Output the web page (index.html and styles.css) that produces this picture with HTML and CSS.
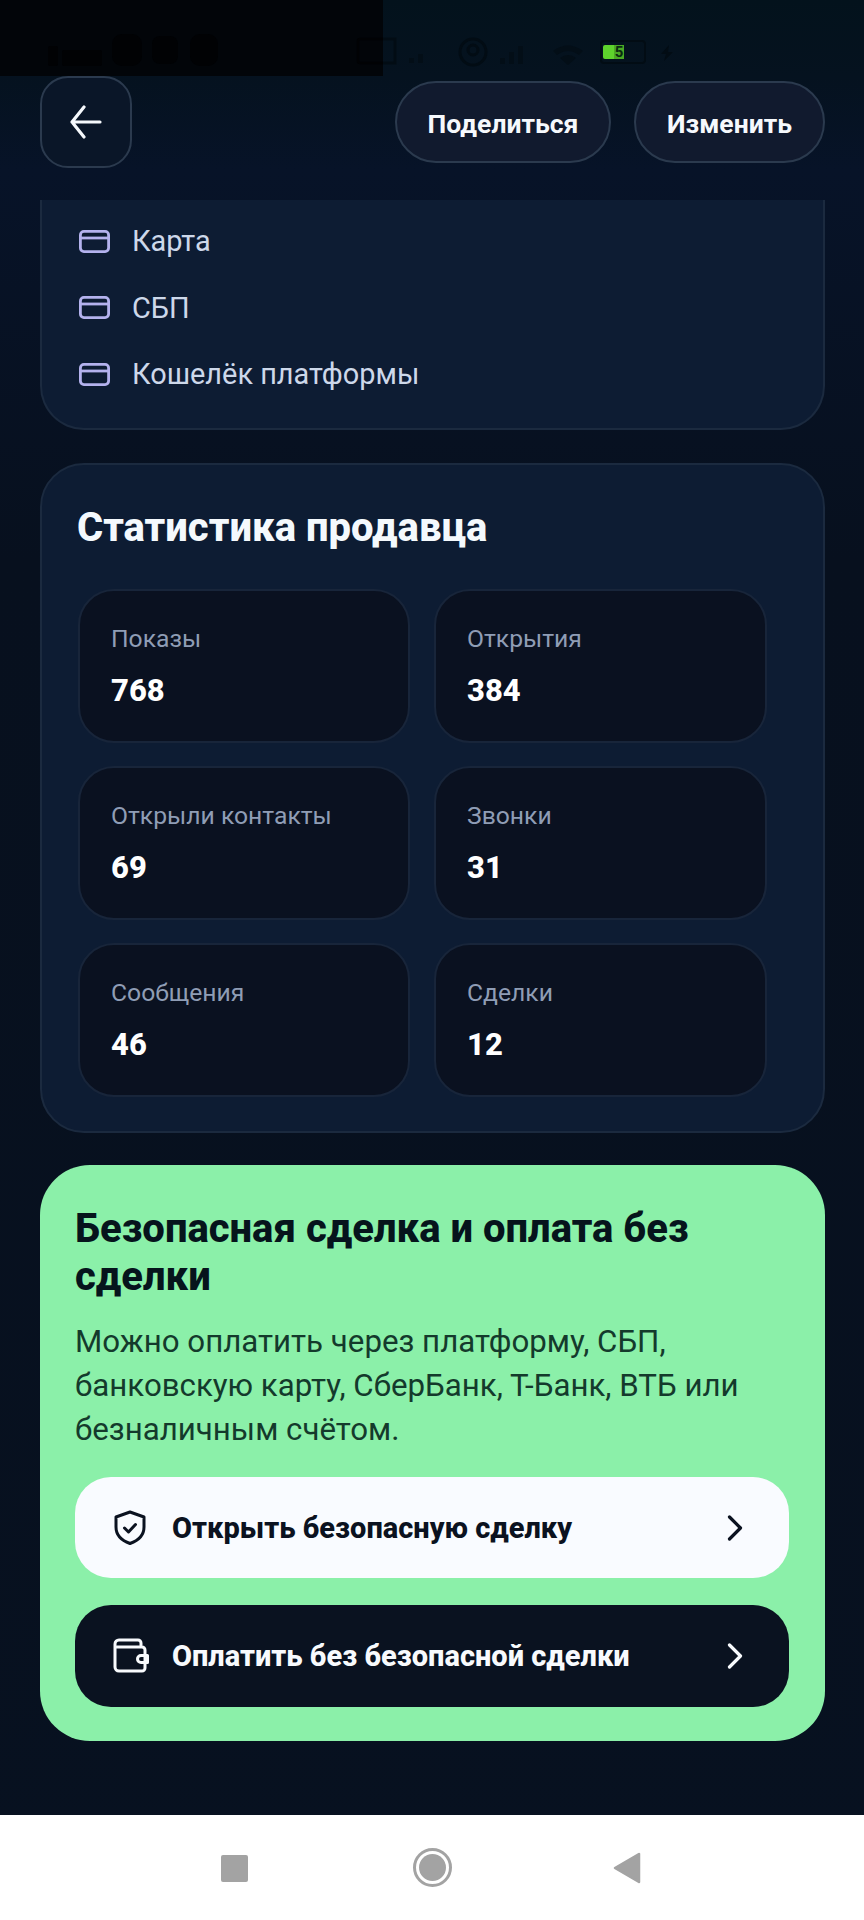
FILE: index.html
```html
<!DOCTYPE html>
<html lang="ru">
<head>
<meta charset="utf-8">
<title>Статистика продавца</title>
<link rel="stylesheet" href="styles.css">
</head>
<body>
<div class="screen">
  <div class="status">
    <div class="mask">
      <svg class="mask-icons" width="383" height="76" viewBox="0 0 383 76"><g fill="#010204"><rect x="48" y="46" width="10" height="20" rx="2"/><rect x="62" y="50" width="40" height="16" rx="2"/><rect x="112" y="34" width="30" height="32" rx="10"/><rect x="152" y="36" width="26" height="28" rx="8"/><rect x="190" y="34" width="28" height="32" rx="10"/></g><rect x="358" y="39" width="30" height="24" rx="2" fill="none" stroke="#010204" stroke-width="2.500"/></svg>
    </div>
    <svg class="status-icons" width="217" height="76" viewBox="0 0 217 76">
      <g fill="none" stroke="#020c14" stroke-width="3">
        <path d="M0 39h12v24H0"/>
        <circle cx="90" cy="52" r="13"/>
        <circle cx="90" cy="50" r="5"/>
      </g>
      <g fill="#030e17">
        <rect x="26" y="58" width="5" height="5"/><rect x="35" y="54" width="5" height="9"/>
        <rect x="117" y="58" width="5" height="6"/><rect x="126" y="52" width="5" height="12"/><rect x="135" y="46" width="5" height="18"/>
        <path d="M170 51q15-11 30 0l-4 4q-11-8-22 0zM177 58q8-6 16 0l-8 7z"/>
      </g>
    </svg>
    <div class="battery"><span class="battery-fill"></span><span class="battery-num">5</span></div>
    <svg class="bolt" width="14" height="16" viewBox="0 0 14 16"><path d="M9 0 1 9h5l-2 7 9-9H8z" fill="#020c14"/></svg>
  </div>

  <header class="topbar">
    <button class="back" type="button" aria-label="Назад">
      <svg width="34" height="34" viewBox="0 0 34 34" fill="none" stroke="#f5f8fc" stroke-width="3.200" stroke-linecap="round" stroke-linejoin="round"><path d="M31 17H3M15 2 3 17l12 15"/></svg>
    </button>
    <div class="top-actions">
      <button class="pill pill-share" type="button">Поделиться</button>
      <button class="pill pill-edit" type="button">Изменить</button>
    </div>
  </header>

  <main class="content">
    <section class="card card-pay">
      <div class="pay-row">
        <svg class="pay-icon" viewBox="0 0 31 23" fill="none" stroke="#b4b2ee" stroke-width="2.800"><rect x="1.400" y="1.400" width="28.200" height="20.200" rx="3.500"/><path d="M1.400 8h28.200"/></svg>
        <span>Карта</span>
      </div>
      <div class="pay-row">
        <svg class="pay-icon" viewBox="0 0 31 23" fill="none" stroke="#b4b2ee" stroke-width="2.800"><rect x="1.400" y="1.400" width="28.200" height="20.200" rx="3.500"/><path d="M1.400 8h28.200"/></svg>
        <span>СБП</span>
      </div>
      <div class="pay-row">
        <svg class="pay-icon" viewBox="0 0 31 23" fill="none" stroke="#b4b2ee" stroke-width="2.800"><rect x="1.400" y="1.400" width="28.200" height="20.200" rx="3.500"/><path d="M1.400 8h28.200"/></svg>
        <span>Кошелёк платформы</span>
      </div>
    </section>

    <section class="card card-stats">
      <h2 class="stats-title">Статистика продавца</h2>
      <div class="stats-grid">
        <div class="tile"><div class="tile-label">Показы</div><div class="tile-value">768</div></div>
        <div class="tile"><div class="tile-label">Открытия</div><div class="tile-value">384</div></div>
        <div class="tile"><div class="tile-label">Открыли контакты</div><div class="tile-value">69</div></div>
        <div class="tile"><div class="tile-label">Звонки</div><div class="tile-value">31</div></div>
        <div class="tile"><div class="tile-label">Сообщения</div><div class="tile-value">46</div></div>
        <div class="tile"><div class="tile-label">Сделки</div><div class="tile-value">12</div></div>
      </div>
    </section>

    <section class="promo">
      <h2 class="promo-title">Безопасная сделка и оплата без сделки</h2>
      <p class="promo-text">Можно оплатить через платформу, СБП, банковскую карту, СберБанк, Т-Банк, ВТБ или безналичным счётом.</p>
      <button class="action action-light" type="button">
        <svg class="action-icon" width="36" height="36" viewBox="0 0 36 36" fill="none" stroke="#0b1220" stroke-width="3" stroke-linecap="round" stroke-linejoin="round"><path d="M17 2 31 7v10c0 8-5.500 13.500-14 16.500C8.500 30.500 3 25 3 17V7z"/><path d="M11.500 18l4 4 7-7.500"/></svg>
        <span class="action-text">Открыть безопасную сделку</span>
        <svg class="chevron" width="16" height="26" viewBox="0 0 16 26" fill="none" stroke="#0b1220" stroke-width="3.200" stroke-linecap="round" stroke-linejoin="round"><path d="M2.500 2 13.500 13 2.500 24"/></svg>
      </button>
      <button class="action action-dark" type="button">
        <svg class="action-icon" width="36" height="36" viewBox="0 0 36 36" fill="none" stroke="#f8fafd" stroke-width="3" stroke-linecap="round" stroke-linejoin="round"><path d="M4 9h25a3 3 0 0 1 3 3v18a3 3 0 0 1-3 3H6a4 4 0 0 1-4-4V6a4 4 0 0 1 4-4h19a3 3 0 0 1 3 3v4"/><path d="M34.500 17.500H28a3.500 3.500 0 0 0 0 7h6.500z"/></svg>
        <span class="action-text">Оплатить без безопасной сделки</span>
        <svg class="chevron" width="16" height="26" viewBox="0 0 16 26" fill="none" stroke="#f8fafd" stroke-width="3.200" stroke-linecap="round" stroke-linejoin="round"><path d="M2.500 2 13.500 13 2.500 24"/></svg>
      </button>
    </section>
  </main>

  <nav class="navbar">
    <span class="nav-square"></span>
    <span class="nav-home"><span class="nav-home-dot"></span></span>
    <svg class="nav-back" width="28" height="32" viewBox="0 0 28 32"><path d="M26 2v28L2 16z" fill="#a3a3a3" stroke="#a3a3a3" stroke-width="2.500" stroke-linejoin="round"/></svg>
  </nav>
</div>
</body>
</html>
```

FILE: styles.css
```css
* { box-sizing: border-box; }
html, body { margin: 0; padding: 0; }
body { width: 864px; height: 1920px; overflow: hidden; font-family: Roboto, "Noto Sans", sans-serif; }
button { font-family: inherit; cursor: pointer; }

.screen {
  width: 864px; height: 1920px; overflow: hidden;
  display: flex; flex-direction: column;
  background: linear-gradient(180deg, #03121c 0, #05121f 76px, #071328 170px, #07101e 560px, #071120 100%);
}

.status { height: 76px; flex: none; display: flex; align-items: flex-start; }
.mask { width: 383px; height: 76px; background: #020509; flex: none; }
.mask-icons { display: block; }
.status-icons { flex: none; display: block; }
.battery {
  flex: none; margin-top: 40px; width: 46px; height: 24px;
  border: 2px solid #020c14; border-radius: 4px; display: flex; align-items: center; padding-left: 1px;
}
.battery-fill { width: 11px; height: 14px; background: #5ed22c; border-radius: 2px 0 0 2px; }
.battery-num { width: 10px; height: 14px; background: #4aa824; color: #0a2a10; font-size: 15px; line-height: 14px; font-weight: 700; text-align: center; }
.bolt { flex: none; margin: 45px 0 0 14px; display: block; }

.topbar {
  height: 92px; flex: none; display: flex; align-items: center; justify-content: space-between;
  padding: 0 39px 0 40px;
}
.back {
  width: 92px; height: 92px; padding: 0; border-radius: 28px;
  background: #0a1628; border: 2px solid #2b3a4e;
  display: flex; align-items: center; justify-content: center;
}
.top-actions { display: flex; gap: 23px; }
.pill {
  height: 82px; border-radius: 41px; background: #111a2e; border: 2px solid #2b3a4e;
  color: #f6f9fd; font-size: 26.500px; font-weight: 700; padding: 2px 0 0; text-align: center;
}
.pill-share { width: 216px; }
.pill-edit { width: 191px; }

.content { flex: none; margin-top: 32px; padding: 0 39px 0 40px; display: flex; flex-direction: column; }

.card { background: #0d1c33; border: 2px solid #1b2a3f; }
.card-pay {
  height: 230px; border-top: 0; border-radius: 0 0 44px 44px;
  padding: 8px 36px 24px 37px; display: flex; flex-direction: column;
}
.pay-row { height: 66.500px; flex: none; display: flex; align-items: center; gap: 22px; color: #cdd8ea; font-size: 28.900px; }
.pay-icon { width: 31px; height: 23px; flex: none; }

.card-stats { margin-top: 33px; height: 670px; border-radius: 44px; padding: 38px 57px 0 36px; }
.stats-title { margin: 0 0 36px -1px; height: 50px; line-height: 50px; font-size: 40px; font-weight: 800; color: #f4f9fd; }
.stats-grid { display: grid; grid-template-columns: 332px 333px; grid-auto-rows: 154px; column-gap: 24px; row-gap: 23px; }
.tile { background: #0a1120; border: 2px solid #18253a; border-radius: 36px; padding: 32px 30px 0 31px; }
.tile-label { font-size: 24.700px; line-height: 32px; color: #8f9db5; }
.tile-value { margin-top: 17px; font-size: 31px; line-height: 38px; font-weight: 800; color: #ffffff; }

.promo {
  margin-top: 32px; height: 576px;
  background: #8bf0a9; border-radius: 50px; padding: 40px 35px 0;
}
.promo-title { margin: 0; font-size: 40px; line-height: 48px; font-weight: 800; color: #06141c; }
.promo-text { margin: 19px 0 0; font-size: 31.250px; line-height: 44px; color: #143a2c; }
.action {
  width: 714px; height: 101px; border: 0; border-radius: 36px; padding: 0 46px 0 38px;
  display: flex; align-items: center; font-size: 29px; font-weight: 800; text-align: left;
}
.action-light { margin-top: 25px; background: #f9fbff; color: #0b1220; }
.action-dark { margin-top: 27px; background: #0a1220; color: #f8fafd; height: 102px; }
.action-icon { flex: none; }
.action-text { flex: 1; margin-left: 23px; }
.chevron { flex: none; }

.navbar {
  margin-top: auto; height: 105px; flex: none; background: #ffffff;
  display: flex; align-items: center; justify-content: space-between;
  padding: 0 223px 0 221px;
}
.nav-square { width: 27px; height: 27px; background: #a3a3a3; border-radius: 2px; margin-top: 1px; }
.nav-home {
  width: 39px; height: 39px; border-radius: 50%; border: 3px solid #a3a3a3; margin-left: 4px;
  display: flex; align-items: center; justify-content: center; flex: none;
}
.nav-home-dot { width: 27px; height: 27px; border-radius: 50%; background: #a3a3a3; }
.nav-back { flex: none; margin-top: 1px; }
```
